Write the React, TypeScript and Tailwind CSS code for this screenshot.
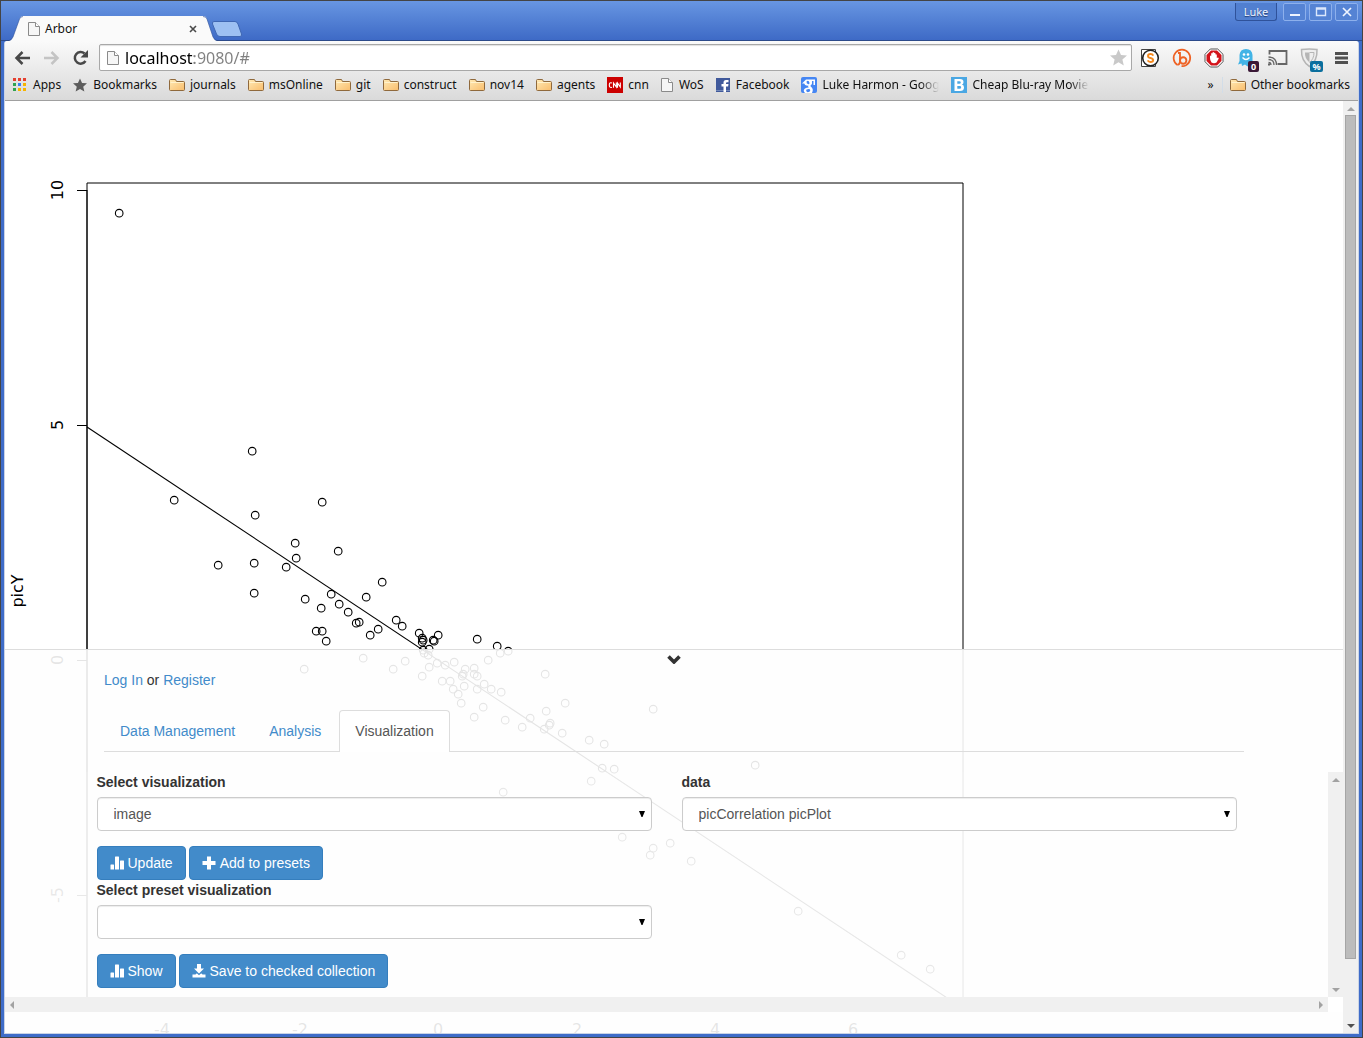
import React, { useState } from "react";
import type { ReactNode } from "react";

const POINTS: [number, number][] = [
  [119, 213], [252, 451], [174, 500], [322, 502], [255, 515], [295, 543], [338, 551], [296, 558], [218, 565],
  [254, 563], [286, 567], [382, 582], [254, 593], [305, 599], [331, 594], [366, 597], [321, 608], [339, 604],
  [348, 612], [356, 623], [359, 622], [316, 631], [322, 631], [326, 641], [370, 635], [378, 629], [396, 620],
  [402, 626], [419, 633], [422, 638], [423, 640], [422, 642], [433, 640], [434, 641], [438, 635], [477, 639],
  [497, 646], [508, 651], [423, 650], [429, 649], [363, 658], [393, 669], [405, 661], [422, 676], [429, 667],
  [428, 655], [424, 653], [437, 663], [445, 665], [454, 662], [442, 681], [450, 681], [465, 669], [474, 668],
  [462, 676], [463, 674], [474, 674], [477, 676], [488, 660], [500, 653], [464, 686], [453, 689], [458, 694],
  [477, 689], [484, 684], [491, 689], [501, 692], [461, 703], [483, 707], [474, 717], [505, 720], [522, 727],
  [530, 718], [546, 711], [565, 703], [545, 674], [653, 709], [550, 723], [549, 725], [544, 729], [562, 733],
  [589, 740], [604, 744], [602, 768], [614, 769], [304, 669], [591, 781], [503, 792], [755, 765], [622, 837],
  [653, 848], [650, 855], [670, 843], [691, 861], [798, 911], [901, 955], [930, 969],
];

const Y_TICKS = [
  { y: 190, label: "10" },
  { y: 425, label: "5" },
  { y: 660, label: "0" },
  { y: 895, label: "-5" },
];

const X_TICKS = [
  { x: 162, label: "-4" },
  { x: 300, label: "-2" },
  { x: 438, label: "0" },
  { x: 577, label: "2" },
  { x: 715, label: "4" },
  { x: 853, label: "6" },
];

function Plot() {
  return (
    <svg width="1338" height="933" viewBox="5 101 1338 933" className="block max-w-none font-['DejaVu_Sans',sans-serif] text-base" role="img" aria-label="picY correlation plot">
      <g fill="none" stroke="#000" strokeWidth="1">
        <path d="M87 1002V183H963V1002" />
        <path d="M87 190V1002" />
        {Y_TICKS.map((t) => (
          <path key={t.label} d={`M77 ${t.y + 0.5}H87`} />
        ))}
        <path d="M87 427L963 1008.500" strokeWidth="1.1" />
        {POINTS.map(([x, y], i) => (
          <circle key={i} cx={x + 0.2} cy={y + 0.2} r="3.8" strokeWidth="1.1" />
        ))}
      </g>
      <g textAnchor="middle">
        {Y_TICKS.map((t) => (
          <text key={t.label} transform={`translate(63 ${t.y}) rotate(-90)`}>{t.label}</text>
        ))}
        {X_TICKS.map((t) => (
          <text key={t.label} x={t.x} y="1035">{t.label}</text>
        ))}
        <text transform="translate(23 591) rotate(-90)">picY</text>
      </g>
    </svg>
  );
}

function PageIcon() {
  return (
    <svg width="12" height="14" viewBox="0 0 12 14" className="mr-px shrink-0" aria-hidden="true">
      <path d="M.5.5H7.5L11.500 4.500V13.500H.5Z" fill="#f6f6f6" stroke="#8a8a8a" />
      <path d="M7.500.5V4.500H11.500" fill="#fff" stroke="#8a8a8a" />
    </svg>
  );
}

function FolderIcon() {
  return (
    <svg width="16" height="14" viewBox="0 0 16 14" className="shrink-0" aria-hidden="true">
      <defs>
        <linearGradient id="folder" x1="0" y1="0" x2="1" y2="1">
          <stop offset="0" stopColor="#ffe9b4" />
          <stop offset="1" stopColor="#f9bd6c" />
        </linearGradient>
      </defs>
      <path d="M.5 11.500V2.500Q.5 1.500 1.500 1.500H6.500L7.500 3.500H14.500Q15.500 3.500 15.500 4.500V11.500Q15.500 12.500 14.500 12.500H1.500Q.5 12.500.5 11.500Z" fill="url(#folder)" stroke="#8f693c" />
      <path d="M1.500 4.500H14.500" stroke="#fff2cc" />
    </svg>
  );
}

function AppsIcon() {
  const colors = ["#e5402f", "#e5402f", "#e5402f", "#31a350", "#3b7ff0", "#f6b400", "#31a350", "#f6b400", "#f6b400"];
  return (
    <svg width="14" height="14" viewBox="0 0 14 14" className="mr-px shrink-0" aria-hidden="true">
      {colors.map((c, i) => (
        <rect key={i} x={(i % 3) * 5} y={Math.floor(i / 3) * 5} width="3" height="3" fill={c} />
      ))}
    </svg>
  );
}

function StarIcon({ size, color }: { size: number; color: string }) {
  return (
    <svg width={size} height={size} viewBox="0 0 17 17" className="mr-px shrink-0" aria-hidden="true">
      <path d="M8.500 0.500L11 6L17 6.500L12.400 10.500L13.800 16.500L8.500 13.300L3.200 16.500L4.600 10.500L0 6.500L6 6Z" fill={color} />
    </svg>
  );
}

function CnnIcon() {
  return (
    <svg width="16" height="16" viewBox="0 0 16 16" className="shrink-0" aria-hidden="true">
      <rect width="16" height="16" fill="#cc0000" />
      <path d="M5 6Q2.300 5 2.300 8T5 10.300M6.500 10.800V6L9.300 10V5.500M10.500 10.800V6L13.300 10V5.500" fill="none" stroke="#fff" strokeWidth="1.100" />
    </svg>
  );
}

function FacebookIcon() {
  return (
    <svg width="14" height="14" viewBox="0 0 14 14" className="mr-px shrink-0" aria-hidden="true">
      <rect width="14" height="14" fill="#40599b" />
      <rect y="12" width="14" height="1" fill="#7388b8" />
      <path d="M7.500 14V8.500H5.500V6H7.500V4.500Q7.500 2 10 2H12.500V4.300H11Q10 4.300 10 5.300V6H12.500L12.100 8.500H10V14Z" fill="#fff" />
    </svg>
  );
}

function GoogleIcon() {
  return (
    <svg width="16" height="16" viewBox="0 0 16 16" className="shrink-0" aria-hidden="true">
      <rect width="16" height="16" rx="2" fill="#4586f3" />
      <path d="M1 6.500L5 2.500H14V8H12.500V4H11Q11.500 7 9.800 8.200Q8.800 9 10 9.800Q13 12 11 16H4Q1.500 13.500 4 11.500Q5.500 10.500 7.700 10.500Q6.700 9.500 7.300 8.600Q3.500 9 3.200 6.500Z" fill="#fff" />
      <path d="M5.600 4.200Q7.800 2.800 8.500 5.800Q8.500 7.500 7.300 7.300Q5 6.500 5.600 4.200ZM5.500 12.600Q8.800 11 9.300 13.300Q9 15.200 6.700 15.200Q4.500 14.500 5.500 12.600Z" fill="#4586f3" />
    </svg>
  );
}

function BlurayIcon() {
  return (
    <svg width="16" height="16" viewBox="0 0 16 16" className="shrink-0" aria-hidden="true">
      <rect width="16" height="16" fill="#4aa7e3" />
      <path fillRule="evenodd" d="M3.500 2H9Q12.500 2 12.500 5Q12.500 7 11 7.600Q13 8.300 13 10.500Q13 14 9 14H3.500ZM6.300 4.200V6.800H8.300Q9.800 6.800 9.800 5.500T8.300 4.200ZM6.300 8.900V11.800H8.500Q10.200 11.800 10.200 10.300T8.500 8.900Z" fill="#fff" />
    </svg>
  );
}

const BOOKMARKS: { label: string; icon: ReactNode; fade?: boolean }[] = [
  { label: "Apps", icon: <AppsIcon /> },
  { label: "Bookmarks", icon: <StarIcon size={14} color="#5c5c5c" /> },
  { label: "journals", icon: <FolderIcon /> },
  { label: "msOnline", icon: <FolderIcon /> },
  { label: "git", icon: <FolderIcon /> },
  { label: "construct", icon: <FolderIcon /> },
  { label: "nov14", icon: <FolderIcon /> },
  { label: "agents", icon: <FolderIcon /> },
  { label: "cnn", icon: <CnnIcon /> },
  { label: "WoS", icon: <PageIcon /> },
  { label: "Facebook", icon: <FacebookIcon /> },
  { label: "Luke Harmon - Googl", icon: <GoogleIcon />, fade: true },
  { label: "Cheap Blu-ray Movie", icon: <BlurayIcon />, fade: true },
];

function TitleBar() {
  const frameButton = "flex h-[18px] w-[23px] items-center justify-center rounded-[2px] border border-[#8db0ec] bg-[#5583d4]";
  return (
    <header className="flex h-10 items-end justify-between border-b border-[#2c4a8a] bg-linear-to-b from-[#6896e2] to-[#3e6ac6]">
      <div className="-mb-px flex items-end pl-2">
        <svg width="14" height="25" viewBox="0 0 14 25" aria-hidden="true">
          <path d="M0 25Q3 24 4 21L10.500 3Q11.500 0 14 0V25Z" fill="#fafafa" />
          <path d="M0 24.500Q3 23.500 4 21L10.500 3Q11.500.5 14 .5" fill="none" stroke="#2f5299" strokeOpacity=".6" />
        </svg>
        <div className="flex h-[25px] w-[180px] items-center bg-[#fafafa] pl-[5px] pr-1">
          <PageIcon />
          <span className="ml-1 flex-1">Arbor</span>
          <button type="button" aria-label="Close tab" className="p-0.5">
            <svg width="8" height="8" viewBox="0 0 8 8"><path d="M1 1L7 7M7 1L1 7" stroke="#4a4a4a" strokeWidth="1.600" /></svg>
          </button>
        </div>
        <svg width="14" height="25" viewBox="0 0 14 25" aria-hidden="true">
          <path d="M0 0Q3 0 4 3L10 21Q11 24 14 25H0Z" fill="#fafafa" />
          <path d="M0 .5Q3 .5 4 3L10 21Q11 23.500 14 24.500" fill="none" stroke="#2f5299" strokeOpacity=".6" />
        </svg>
        <button type="button" aria-label="New tab" className="-ml-1.5 mb-1">
          <svg width="32" height="16" viewBox="0 0 32 16" className="block">
            <path d="M3 .5H24Q26 .5 27 3L30.500 13Q31 15.500 29 15.500H9Q6.500 15.500 5.500 13L1.500 3Q1 .5 3 .5Z" fill="#9dc0f2" stroke="#3f67b3" />
          </svg>
        </button>
      </div>
      <div className="flex self-start pr-1 text-[11px] leading-4 text-[#eef4ff]">
        <button type="button" className="mr-1.5 mt-0.5 h-[18px] w-[42px] rounded-b-[3px] border border-t-0 border-[#2f529a] bg-[#517fd0] [text-shadow:0_1px_1px_#223c70]">Luke</button>
        <div className="mt-0.5 flex gap-[3px]">
          <button type="button" aria-label="Minimize" className={frameButton}>
            <svg width="12" height="10" viewBox="0 0 12 10"><path d="M1 8H11" stroke="#eef4ff" strokeWidth="2" /></svg>
          </button>
          <button type="button" aria-label="Maximize" className={frameButton}>
            <svg width="12" height="10" viewBox="0 0 12 10"><path d="M1.500 1H10.500V8.500H1.500ZM1.500 2H10.500" fill="none" stroke="#dce8fc" strokeWidth="1.400" /></svg>
          </button>
          <button type="button" aria-label="Close window" className={frameButton}>
            <svg width="10" height="10" viewBox="0 0 10 10"><path d="M1 1L9 9M9 1L1 9" stroke="#eef4ff" strokeWidth="1.700" /></svg>
          </button>
        </div>
      </div>
    </header>
  );
}

function Extensions() {
  return (
    <div className="flex items-center gap-2">
      <button type="button" aria-label="S extension">
        <svg width="24" height="22" viewBox="0 0 24 22">
          <path d="M4.500 2.500H18.500V19.500H4.500Z" fill="#fff" stroke="#444" />
          <circle cx="13.500" cy="11" r="7.800" fill="#fff" stroke="#222" strokeWidth="1.600" />
          <path d="M16.300 8.600Q15.500 7 13.500 7Q11 7 11 8.900Q11 10.500 13.500 11T16.200 13Q16.200 15 13.500 15Q11.500 15 10.600 13.400" fill="none" stroke="#f58a1f" strokeWidth="1.900" />
        </svg>
      </button>
      <button type="button" aria-label="Bitly">
        <svg width="24" height="22" viewBox="0 0 24 22">
          <path d="M8.500 18A8.300 8.300 0 1 1 17 18.200Q14.500 19.500 12.500 19" fill="none" stroke="#ee6123" strokeWidth="1.700" />
          <path d="M9 6H11V15Q10.500 17.500 8.500 18" fill="none" stroke="#ee6123" strokeWidth="1.800" />
          <circle cx="14.200" cy="13.500" r="3.200" fill="none" stroke="#ee6123" strokeWidth="1.900" />
        </svg>
      </button>
      <button type="button" aria-label="AdBlock">
        <svg width="24" height="22" viewBox="0 0 24 22">
          <path d="M9.300 2H16.700L22 7.300V14.700L16.700 20H9.300L4 14.700V7.300Z" fill="#fff" stroke="#555" />
          <path d="M10 3.500H16L20.500 8V14L16 18.500H10L5.500 14V8Z" fill="#d3131a" />
          <path d="M9 9Q9.700 8 10.200 9V6.500Q11 5.500 11.500 6.500V5.500Q12.500 4.500 13 5.500V6Q14.200 5.200 14.500 6.500V7.500Q15.500 6.800 15.800 8V11L17 10.500Q18.300 10.500 17.500 12L15.500 15.500Q13 17 10.500 15.500Q9 13.500 9 11Z" fill="#fff" />
        </svg>
      </button>
      <button type="button" aria-label="Ghostery, 0 trackers" className="relative">
        <svg width="24" height="22" viewBox="0 0 24 22">
          <path d="M6.500 14V8Q7 2 13 2T19.500 8V14L20.500 18L17 17L14.500 19.500L12 17.500L9 19L8.500 16.500L5 17.500Z" fill="#42b4e6" />
          <circle cx="11" cy="7.500" r="1.300" fill="#fff" /><circle cx="15" cy="7.500" r="1.300" fill="#fff" />
          <path d="M9.500 10.500Q13 14.500 16.500 10.500" fill="none" stroke="#fff" strokeWidth="1.300" />
        </svg>
        <span className="absolute -bottom-[3px] -right-[2px] h-[11px] w-[11px] rounded-[2px] bg-[#3a1836] text-[9px] font-bold leading-[11px] text-white">0</span>
      </button>
      <button type="button" aria-label="Cast">
        <svg width="24" height="22" viewBox="0 0 24 22">
          <path d="M4.500 7.500V4H21.500V17H12.500" fill="none" stroke="#666" strokeWidth="1.800" />
          <path d="M3.500 15.500Q6 15.500 6 18M3.500 12.500Q9 12.500 9 18M3.500 10Q11.500 10 11.500 18" fill="none" stroke="#666" strokeWidth="1.300" />
          <rect x="3" y="16.500" width="2" height="2" fill="#666" />
        </svg>
      </button>
      <button type="button" aria-label="Shield, percent" className="relative">
        <svg width="24" height="22" viewBox="0 0 24 22">
          <path d="M4.500 2.500Q12.500 1.500 20 2.500Q20.500 14 12.500 19.500Q4 14 4.500 2.500Z" fill="#eee" stroke="#b5b5b5" strokeWidth="1.500" />
          <path d="M8 5.500H12.500V15.500Q7.500 11.500 8 5.500Z" fill="#b5b5b5" /><path d="M12.500 5.500H17Q17 12 12.500 15.500" fill="none" stroke="#b5b5b5" />
        </svg>
        <span className="absolute -bottom-[3px] -right-[2px] h-[11px] w-[13px] rounded-[2px] bg-[#0b6f9e] text-[9px] font-bold leading-[11px] text-white">%</span>
      </button>
      <button type="button" aria-label="Menu">
        <svg width="24" height="22" viewBox="0 0 24 22"><path d="M6 6.500H19M6 11H19M6 15.500H19" stroke="#505050" strokeWidth="3" /></svg>
      </button>
    </div>
  );
}

function Toolbar() {
  const [url, setUrl] = useState("localhost:9080/#");
  return (
    <div className="flex items-center pl-2 pr-[5px] pt-[3px]">
      <div className="flex items-center gap-[5px] pr-1">
        <button type="button" aria-label="Back">
          <svg width="24" height="22" viewBox="0 0 24 22"><path d="M17 11H4M9.500 5L3.500 11L9.500 17" fill="none" stroke="#484848" strokeWidth="2.500" /></svg>
        </button>
        <button type="button" aria-label="Forward" disabled>
          <svg width="24" height="22" viewBox="0 0 24 22"><path d="M2 11H15M9.500 5L15.500 11L9.500 17" fill="none" stroke="#c4c4c4" strokeWidth="2.500" /></svg>
        </button>
        <button type="button" aria-label="Reload">
          <svg width="24" height="22" viewBox="0 0 24 22">
            <path d="M14.500 14A5.800 5.800 0 1 1 13.500 6.500" fill="none" stroke="#484848" strokeWidth="2.500" />
            <path d="M17 3V10.500H9.500Z" fill="#484848" />
          </svg>
        </button>
      </div>
      <div className="flex h-[27px] flex-1 items-center rounded-[2px] border border-[#a8a8a8] bg-white pl-[7px] pr-[3px] shadow-[inset_0_1px_1px_#e0e0e0]">
        <PageIcon />
        <input
          aria-label="Address"
          value={url}
          onChange={(e) => setUrl(e.target.value)}
          className="ml-[5px] h-6 min-w-0 flex-1 bg-[linear-gradient(90deg,#000_69px,#808080_69px)] bg-clip-text text-base text-transparent outline-none"
        />
        <button type="button" aria-label="Bookmark this page">
          <StarIcon size={17} color="#c9c9c9" />
        </button>
      </div>
      <div className="pl-[5px]">
        <Extensions />
      </div>
    </div>
  );
}

function BookmarkBar() {
  return (
    <nav aria-label="Bookmarks" className="flex h-[29px] items-center px-2 pb-px">
      <div className="flex flex-1 items-center gap-3">
        {BOOKMARKS.map((b) => (
          <a key={b.label} href="#" className="flex items-center gap-[5px] whitespace-nowrap">
            {b.icon}
            <span className={b.fade ? "w-[117px] [mask-image:linear-gradient(90deg,#000_84%,transparent)]" : ""}>{b.label}</span>
          </a>
        ))}
      </div>
      <button type="button" aria-label="More bookmarks" className="pr-2">»</button>
      <a href="#" className="flex items-center gap-[5px] whitespace-nowrap border-l border-[#d2dde8] pl-[7px]">
        <FolderIcon />
        Other bookmarks
      </a>
    </nav>
  );
}

const ARROWS = {
  up: "M0 6L4 2L8 6Z",
  down: "M0 2H8L4 6Z",
  left: "M6 0V8L2 4Z",
  right: "M2 0V8L6 4Z",
};

function Arrow({ dir, color = "#a2a2a2" }: { dir: keyof typeof ARROWS; color?: string }) {
  return (
    <svg width="8" height="8" viewBox="0 0 8 8" className="shrink-0" aria-hidden="true">
      <path d={ARROWS[dir]} fill={color} />
    </svg>
  );
}

function Select({ id, label, options }: { id: string; label: string; options: string[] }) {
  return (
    <div className="mb-[15px]">
      <label htmlFor={id} className="mb-[5px] block font-bold">{label}</label>
      <div className="relative">
        <select id={id} className="block h-[34px] w-full appearance-none rounded border border-[#ccc] bg-white px-4 text-[#555] shadow-[inset_0_1px_1px_rgba(0,0,0,0.075)]">
          {options.map((o) => (
            <option key={o}>{o}</option>
          ))}
        </select>
        <svg width="6" height="6" viewBox="0 0 6 6" className="pointer-events-none absolute right-[7px] top-[14px]" aria-hidden="true">
          <path d="M0 0H6L3.500 6H2.500Z" fill="#000" />
        </svg>
      </div>
    </div>
  );
}

function ActionButton({ icon, children }: { icon: ReactNode; children: ReactNode }) {
  return (
    <button type="button" className="flex h-[34px] items-center gap-1 rounded border border-[#357ebd] bg-[#428bca] px-3 text-white">
      {icon}
      {children}
    </button>
  );
}

function StatsIcon() {
  return (
    <svg width="14" height="14" viewBox="0 0 14 14" aria-hidden="true">
      <path d="M.5 13.500V9Q.5 8.500 1 8.500H3.500Q4 8.500 4 9V13.500ZM5 13.500V1Q5 .5 5.500.5H8.500Q9 .5 9 1V13.500ZM10 13.500V5Q10 4.500 10.500 4.500H13.500Q14 4.500 14 5V13.500Z" fill="#fff" />
    </svg>
  );
}

function PlusIcon() {
  return (
    <svg width="14" height="14" viewBox="0 0 14 14" aria-hidden="true">
      <path d="M5 .5H9V5H13.500V9H9V13.500H5V9H.5V5H5Z" fill="#fff" />
    </svg>
  );
}

function SaveIcon() {
  return (
    <svg width="14" height="14" viewBox="0 0 14 14" aria-hidden="true">
      <path d="M5 0H9V4.500H12L7 9.500L2 4.500H5ZM.5 10.500H3.500L4.500 9.500H5L7 11.300L9 9.500H9.500L10.500 10.500H13.500V13.500H.5Z" fill="#fff" />
    </svg>
  );
}

function ControlPanel() {
  return (
    <section className="absolute inset-x-0 bottom-0 border-t border-[#ddd] bg-[#fefefe]/90 pb-[21px] font-['Liberation_Sans',Arial,sans-serif] text-sm leading-5 text-[#333]">
      <button type="button" aria-label="Collapse panel" className="mx-auto flex h-5 items-start pt-1">
        <svg width="14" height="10" viewBox="0 0 14 10"><path d="M1.500 2.500L7 8L12.500 2.500" fill="none" stroke="#333" strokeWidth="3.600" /></svg>
      </button>
      <div className="mx-auto max-w-[1170px] px-[15px]">
        <p>
          <a href="#" className="text-[#428bca]">Log In</a> or <a href="#" className="text-[#428bca]">Register</a>
        </p>
        <ul className="mb-5 mt-5 flex border-b border-[#ddd]">
          <li className="mr-0.5"><a href="#" className="block px-4 pb-2.5 pt-[11px] text-[#428bca]">Data Management</a></li>
          <li className="mr-0.5"><a href="#" className="block px-4 pb-2.5 pt-[11px] text-[#428bca]">Analysis</a></li>
          <li className="-mb-px"><a href="#" className="block rounded-t border border-b-0 border-[#ddd] bg-white px-[15px] pb-[11px] pt-2.5 text-[#555]">Visualization</a></li>
        </ul>
      </div>
      <div className="grid h-60 grid-cols-[1fr_15px] grid-rows-[1fr_15px]">
        <div className="overflow-hidden bg-white/10">
          <div className="mx-auto grid max-w-[1170px] grid-cols-2 gap-[30px] px-[15px]">
            <div>
              <Select id="visualization" label="Select visualization" options={["image", "table"]} />
              <div className="flex gap-[3px]">
                <ActionButton icon={<StatsIcon />}>Update</ActionButton>
                <ActionButton icon={<PlusIcon />}>Add to presets</ActionButton>
              </div>
              <Select id="preset" label="Select preset visualization" options={[""]} />
              <div className="flex gap-[3px]">
                <ActionButton icon={<StatsIcon />}>Show</ActionButton>
                <ActionButton icon={<SaveIcon />}>Save to checked collection</ActionButton>
              </div>
            </div>
            <Select id="data" label="data" options={["picCorrelation picPlot"]} />
          </div>
        </div>
        <div className="flex flex-col items-center justify-between bg-[#f0f0f0] pb-[3px] pt-1"><Arrow dir="up" /><Arrow dir="down" /></div>
        <div className="flex items-center justify-between bg-[#f0f0f0] px-[3px]"><Arrow dir="left" /><Arrow dir="right" /></div>
        <div className="bg-white" />
      </div>
    </section>
  );
}

export default function App() {
  return (
    <div className="flex h-screen flex-col overflow-hidden border border-[#444] bg-[#3e6cc8] font-['Noto_Sans',sans-serif] text-xs text-[#111]">
      <TitleBar />
      <div className="mx-[3px] mb-[3px] flex min-h-0 flex-1 flex-col rounded-t-[3px] border-x border-b border-[#c9d3e6] bg-white">
        <div className="rounded-t-[3px] border-b border-[#a0a0a0] bg-linear-to-b from-[#fafafa] to-[#dadada]">
          <Toolbar />
          <BookmarkBar />
        </div>
        <div className="flex min-h-0 flex-1">
          <main className="relative min-w-0 flex-1 overflow-hidden">
            <Plot />
            <ControlPanel />
          </main>
          <div className="flex w-[15px] flex-col items-center bg-[#f0f0f0] pb-[3px] pt-1">
            <Arrow dir="up" />
            <div className="mb-[63px] mt-0.5 w-[11px] flex-1 border border-[#a5a5a5] bg-[#bcbcbc]" />
            <Arrow dir="down" color="#505050" />
          </div>
        </div>
      </div>
    </div>
  );
}
